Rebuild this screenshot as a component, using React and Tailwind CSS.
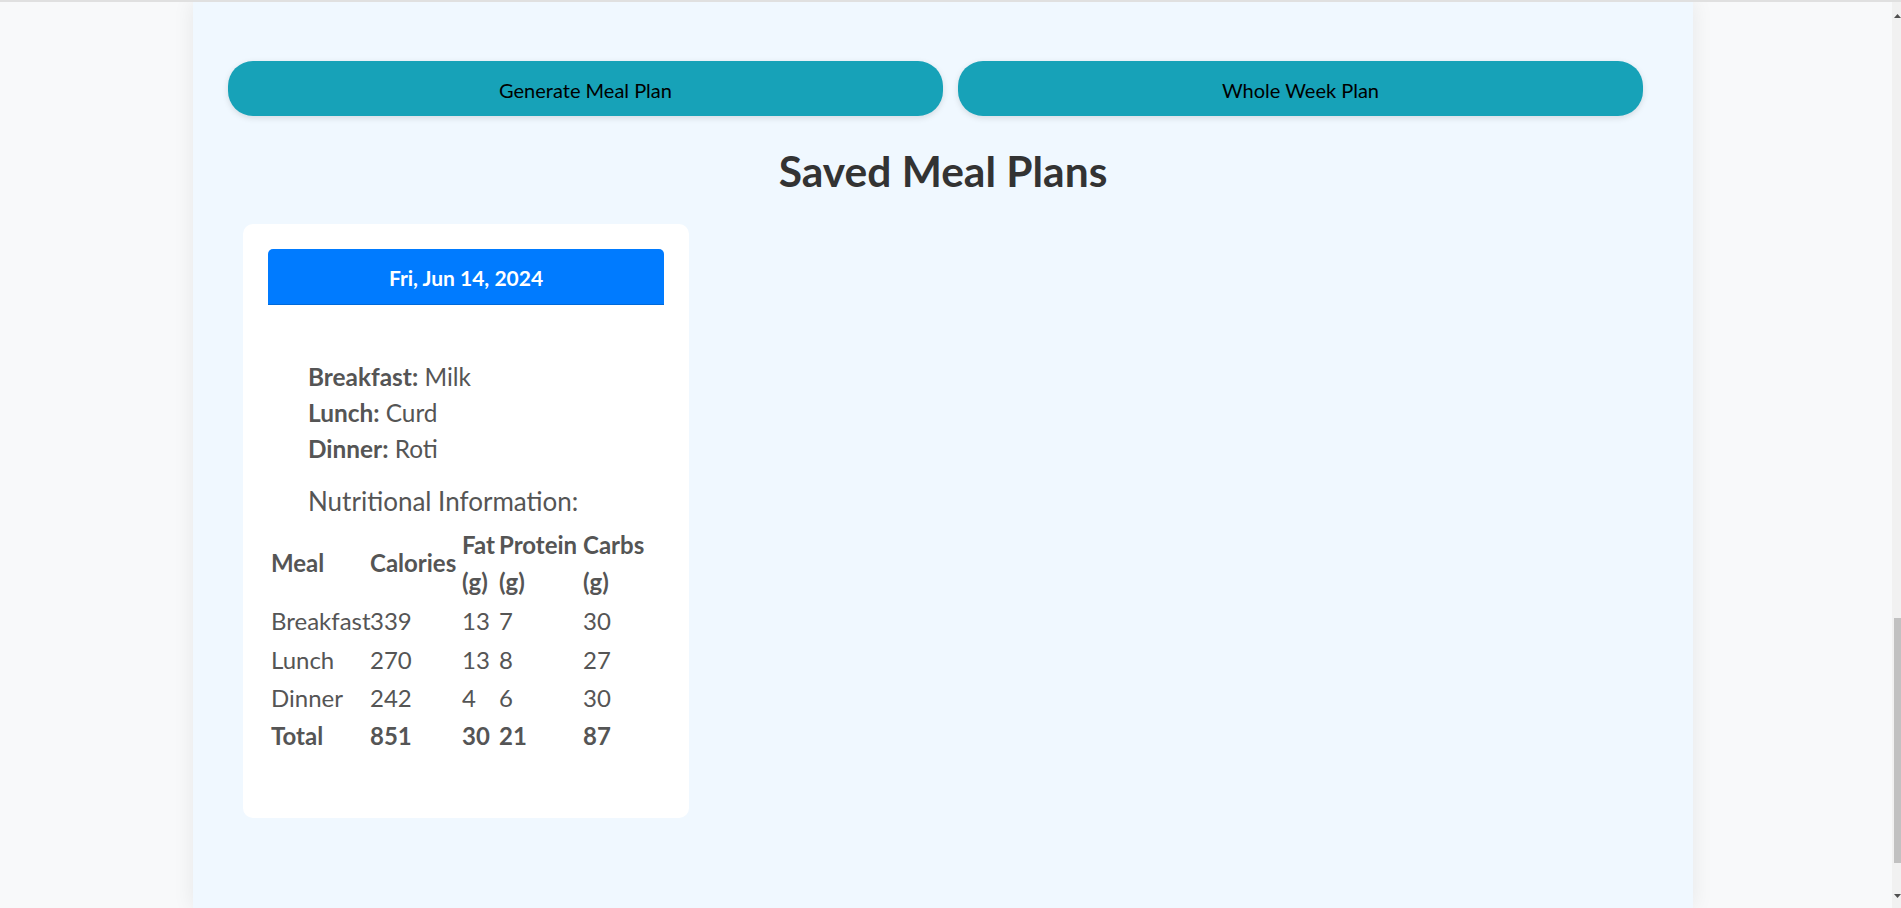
import React from "react";

const meals = [
  { label: "Breakfast", food: "Milk" },
  { label: "Lunch", food: "Curd" },
  { label: "Dinner", food: "Roti" },
];

const nutrition = [
  { meal: "Breakfast", calories: 339, fat: 13, protein: 7, carbs: 30 },
  { meal: "Lunch", calories: 270, fat: 13, protein: 8, carbs: 27 },
  { meal: "Dinner", calories: 242, fat: 4, protein: 6, carbs: 30 },
];

function MealCard({ date }) {
  const total = nutrition.reduce(
    (acc, r) => ({
      calories: acc.calories + r.calories,
      fat: acc.fat + r.fat,
      protein: acc.protein + r.protein,
      carbs: acc.carbs + r.carbs,
    }),
    { calories: 0, fat: 0, protein: 0, carbs: 0 }
  );

  return (
    <div className="ml-[50px] w-[446px] h-[594px] p-[25px] bg-white rounded-[10px] text-[#555]">
      <div className="h-[56px] flex items-center justify-center bg-[#007bff] rounded-t-[5px] border-b border-[#0069d9]">
        <span className="text-white font-bold text-[21px] leading-none pt-[2px]">{date}</span>
      </div>

      <ul className="mt-[54px] pl-[40px] text-[24.4px] leading-[36px]">
        {meals.map((m) => (
          <li key={m.label}>
            <span className="font-bold">{m.label}:</span> {m.food}
          </li>
        ))}
      </ul>

      <h4 className="mt-[15px] pl-[40px] text-[26px] leading-[39px]">Nutritional Information:</h4>

      <table className="mt-[3px] table-fixed border-separate border-spacing-[2px] w-[382px] text-[24px] text-left">
        <colgroup>
          <col className="w-[97px]" />
          <col className="w-[90px]" />
          <col className="w-[35px]" />
          <col className="w-[82px]" />
          <col className="w-[66px]" />
        </colgroup>
        <thead>
          <tr className="leading-[36.7px]">
            <th className="p-px font-bold">Meal</th>
            <th className="p-px font-bold">Calories</th>
            <th className="p-px font-bold">Fat (g)</th>
            <th className="p-px font-bold">Protein (g)</th>
            <th className="p-px font-bold">Carbs (g)</th>
          </tr>
        </thead>
        <tbody className="leading-[34.3px]">
          {nutrition.map((r) => (
            <tr key={r.meal}>
              <td className="p-px">{r.meal}</td>
              <td className="p-px">{r.calories}</td>
              <td className="p-px">{r.fat}</td>
              <td className="p-px">{r.protein}</td>
              <td className="p-px">{r.carbs}</td>
            </tr>
          ))}
          <tr className="font-bold">
            <td className="p-px">Total</td>
            <td className="p-px">{total.calories}</td>
            <td className="p-px">{total.fat}</td>
            <td className="p-px">{total.protein}</td>
            <td className="p-px">{total.carbs}</td>
          </tr>
        </tbody>
      </table>
    </div>
  );
}

export default function App() {
  return (
    <div className="h-[908px] overflow-hidden flex flex-col font-['Lato',sans-serif]">
      <div className="h-[2px] bg-[#e0e0e0]" />
      <div className="flex flex-1 overflow-hidden">
        <main className="flex-1 bg-[#f8f9fa] overflow-hidden">
          <div className="ml-[193px] w-[1500px] h-full bg-[#f0f8ff] shadow-[0_0_20px_rgba(0,0,0,0.08)] pt-[59px]">
            <div className="flex gap-[15px] pl-[35px]">
              <button className="w-[715px] h-[55px] rounded-[25px] bg-[#17a2b8] text-black text-[20px] pt-[2px] shadow-[0_2px_6px_rgba(0,0,0,0.12)]">
                Generate Meal Plan
              </button>
              <button className="w-[685px] h-[55px] rounded-[25px] bg-[#17a2b8] text-black text-[20px] pt-[2px] shadow-[0_2px_6px_rgba(0,0,0,0.12)]">
                Whole Week Plan
              </button>
            </div>

            <h2 className="mt-[29px] text-center text-[42.5px] leading-[51px] font-bold text-[#333]">
              Saved Meal Plans
            </h2>

            <div className="mt-[28px]">
              <MealCard date="Fri, Jun 14, 2024" />
            </div>
          </div>
        </main>

        {/* scrollbar */}
        <div className="w-[9px] bg-[#f1f1f1] flex flex-col items-end">
          <svg width="7" height="20" viewBox="0 0 7 20" className="mt-[6px]">
            <path d="M3.5 6 L7 10 L0 10 Z" fill="#505050" />
          </svg>
          <div className="mt-[590px] w-[7px] h-[245px] bg-[#c1c1c1]" />
          <svg width="7" height="20" viewBox="0 0 7 20" className="mt-[25px]">
            <path d="M0 6 L7 6 L3.5 10 Z" fill="#505050" />
          </svg>
        </div>
      </div>
    </div>
  );
}
